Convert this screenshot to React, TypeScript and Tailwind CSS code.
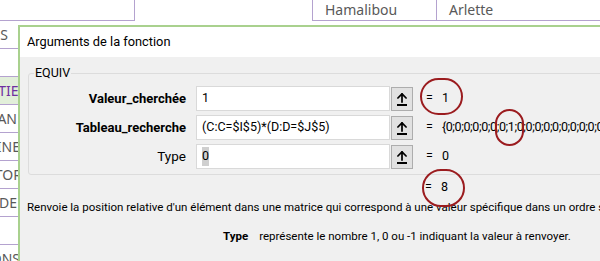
import { ArrowUp } from 'lucide-react';

const sideRows = [
  { text: 'S', pr: 'pr-[32px]', bg: 'bg-white', color: 'text-[#595959]' },
  { text: '', pr: 'pr-[32px]', bg: 'bg-white', color: 'text-[#595959]' },
  { text: 'PATIENT', pr: 'pr-[3px]', bg: 'bg-[#e2efda]', color: 'text-[#7030a0]' },
  { text: 'JEAN', pr: 'pr-[23px]', bg: 'bg-white', color: 'text-[#595959]' },
  { text: 'LINE', pr: 'pr-[20px]', bg: 'bg-white', color: 'text-[#595959]' },
  { text: 'TOR', pr: 'pr-[18px]', bg: 'bg-white', color: 'text-[#595959]' },
  { text: 'ODE', pr: 'pr-[23px]', bg: 'bg-white', color: 'text-[#595959]' },
  { text: '', pr: 'pr-[23px]', bg: 'bg-white', color: 'text-[#595959]' },
  { text: 'ONS', pr: 'pr-[20px]', bg: 'bg-white', color: 'text-[#595959]' },
];

const args = [
  { label: 'Valeur_cherchée', bold: true, value: '1', result: '1' },
  { label: 'Tableau_recherche', bold: true, value: '(C:C=$I$5)*(D:D=$J$5)', result: '{0;0;0;0;0;0;0;1;0;0;0;0;0;0;0;0;0;0;0;0;0' },
  { label: 'Type', bold: false, value: '0', result: '0' },
];

function RefButton() {
  return (
    <div className="w-[22px] h-[24px] bg-[#e1e1e1] border border-[#adadad] flex flex-col items-center justify-center shrink-0">
      <ArrowUp className="w-[14px] h-[14px] text-black" strokeWidth={3} />
      <div className="w-[10px] h-[1.5px] bg-black -mt-[1px]" />
    </div>
  );
}

export default function App() {
  return (
    <div className="relative w-[600px] h-[261px] overflow-hidden bg-white" style={{ fontFamily: '"Noto Sans", sans-serif' }}>
      {/* sheet behind */}
      <div className="flex h-[21px]">
        <div className="w-[135px] border-r border-b border-[#b4a2cf]" />
        <div className="w-[177px]" />
        <div className="w-[124px] border-l border-b border-[#b4a2cf] pl-[12px] text-[14px] leading-[20px] text-[#595959]">Hamalibou</div>
        <div className="flex-1 border-l border-b border-[#b4a2cf] pl-[12px] text-[14px] leading-[20px] text-[#595959]">Arlette</div>
      </div>
      <div className="flex flex-col w-[40px] overflow-hidden">
        {sideRows.map((r, i) => (
          <div key={i} className={`h-[28px] shrink-0 flex items-center justify-end border-b border-[#b4a2cf] whitespace-nowrap text-[14px] ${r.pr} ${r.bg} ${r.color}`}>
            {r.text}
          </div>
        ))}
      </div>

      {/* dialog */}
      <div className="absolute left-[18px] top-[25px] w-[620px] h-[260px] border-l-2 border-t-2 border-[#a9d18e] bg-[#f0f0f0] text-black" style={{ fontFamily: 'Roboto, "Noto Sans", sans-serif' }}>
        <div className="h-[30px] bg-white pl-[7px] text-[12.8px] leading-[30px]">Arguments de la fonction</div>
        <div className="relative mt-[16px] ml-[8px] h-[102px] border border-[#dcdcdc] rounded-[3px]">
          <div className="absolute -top-[10px] left-[5px] px-[1px] bg-[#f0f0f0] text-[12.5px] leading-[18px]">EQUIV</div>
          <div className="flex flex-col gap-[4px] pt-[12px]">
            {args.map((a) => (
              <div key={a.label} className="flex items-center h-[25px]">
                <div className={`w-[157px] shrink-0 text-right ${a.bold ? 'font-bold text-[13px]' : 'text-[13.5px]'}`}>{a.label}</div>
                <div className="ml-[10px] w-[194px] shrink-0 h-[25px] bg-white border border-[#d9d9d9] flex items-center pl-[5px] text-[12.5px]">
                  {a.label === 'Type' ? <span className="bg-[#cfcfcf]">{a.value}</span> : a.value}
                </div>
                <div className="ml-[1px] shrink-0"><RefButton /></div>
                <div className="ml-[13px] shrink-0 text-[12.5px] whitespace-nowrap">=</div>
                <div className="ml-[9px] shrink-0 text-[12.5px] tracking-[-0.4px] whitespace-nowrap">{a.result}</div>
              </div>
            ))}
          </div>
        </div>
        <div className="flex h-[24px] items-center pl-[405px] text-[12.5px]">
          <span>=</span>
          <span className="ml-[9px]">8</span>
        </div>
        <div className="pl-[7px] text-[11.5px] leading-[16px] whitespace-nowrap">
          Renvoie la position relative d'un élément dans une matrice qui correspond à une valeur spécifique dans un ordre spécifié.
        </div>
        <div className="mt-[13px] pl-[203px] text-[11.5px] leading-[16px] whitespace-nowrap">
          <span className="font-bold">Type</span>
          <span className="ml-[11px]">représente le nombre 1, 0 ou -1 indiquant la valeur à renvoyer.</span>
        </div>
      </div>

      {/* annotation circles */}
      <div className="absolute left-[420px] top-[78px] w-[43px] h-[37px] rounded-full border-2 border-[#9b1c1f]" />
      <div className="absolute left-[495px] top-[109px] w-[29px] h-[37px] rounded-full border-2 border-[#9b1c1f]" />
      <div className="absolute left-[422px] top-[169px] w-[43px] h-[38px] rounded-full border-2 border-[#9b1c1f]" />
    </div>
  );
}
